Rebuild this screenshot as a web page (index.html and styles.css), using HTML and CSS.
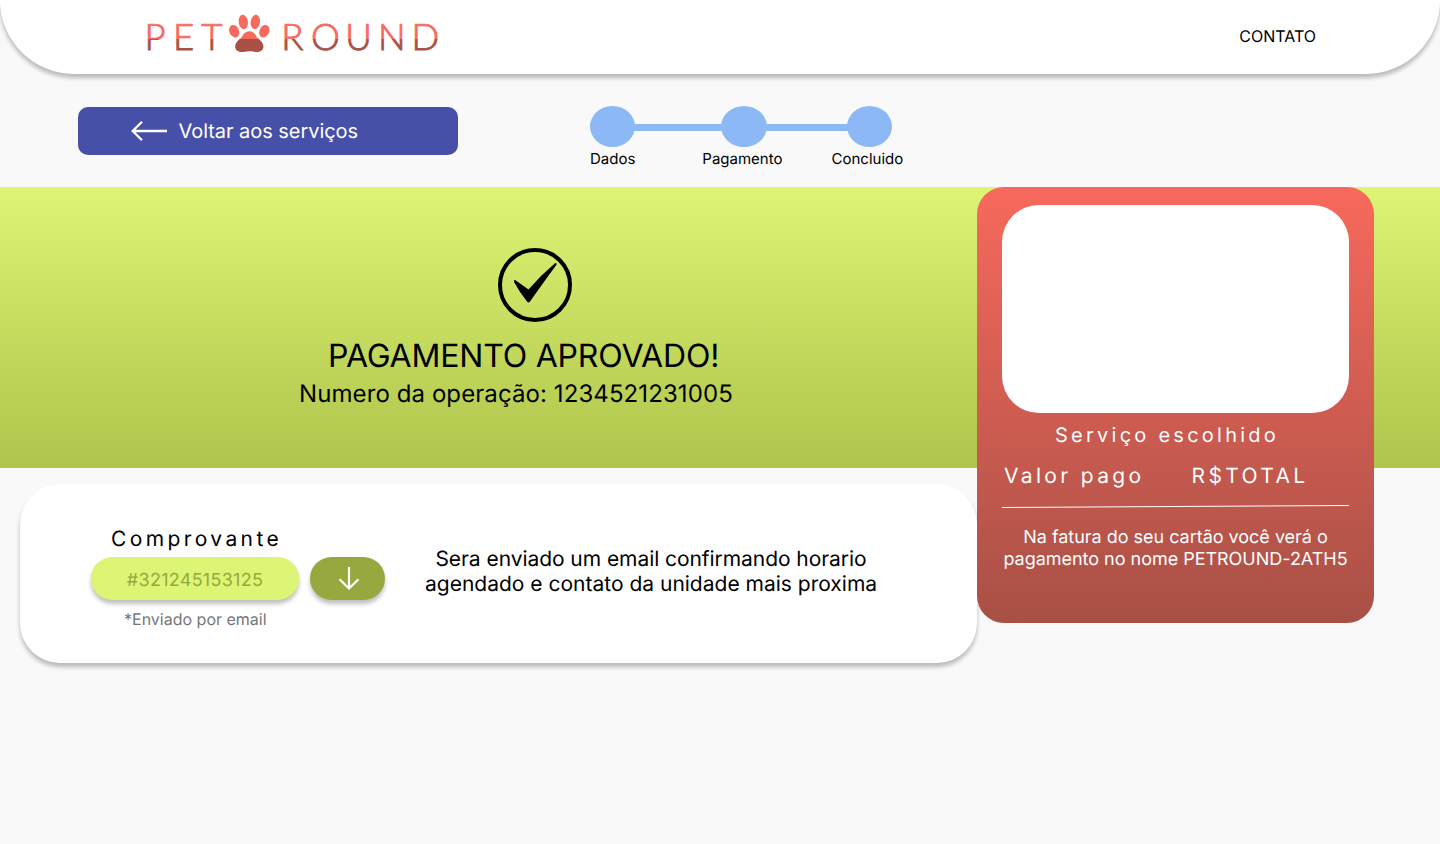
FILE: index.html
```html
<!DOCTYPE html>
<html lang="pt-BR">
<head>
<meta charset="utf-8">
<title>PetRound - Pagamento aprovado</title>
<link rel="stylesheet" href="styles.css">
</head>
<body>
<header class="header">
  <svg class="logo" width="300" height="50" viewBox="142 8 300 50" role="img" aria-label="PetRound">
    <defs>
      <linearGradient id="duo" gradientUnits="userSpaceOnUse" x1="0" y1="0" x2="0" y2="78">
        <stop offset="0.5" stop-color="#f7695c"/>
        <stop offset="0.5" stop-color="#a85046"/>
      </linearGradient>
    </defs>
    <g fill="url(#duo)">
      <text class="logo-text" y="49.700" x="144.500 173 201.200 281.200 311 345.300 378 411.500">PETROUND</text>
      <ellipse cx="243.300" cy="22" rx="4.600" ry="7.200" transform="rotate(-8 243.300 22)"/>
      <ellipse cx="255.300" cy="22" rx="4.600" ry="7.200" transform="rotate(8 255.300 22)"/>
      <ellipse cx="234.200" cy="31.200" rx="4.800" ry="6.500" transform="rotate(-24 234.200 31.200)"/>
      <ellipse cx="264.300" cy="31.200" rx="4.800" ry="6.500" transform="rotate(24 264.300 31.200)"/>
      <path d="M249.300 31.300c3.500 0 5.500 2.200 7.200 5.200 1.500 2.500 6.500 4.800 6.900 9.500.3 3.600-2.400 6-5.700 6-3 0-5-.8-8.400-.8s-5.400.8-8.400.8c-3.300 0-6-2.400-5.700-6 .4-4.700 5.400-7 6.900-9.500 1.700-3 3.700-5.200 7.200-5.200z"/>
    </g>
  </svg>
  <a class="contact">CONTATO</a>
</header>

<nav class="toolbar">
  <a class="back">
    <svg width="38" height="22" viewBox="0 0 38 22" fill="none" stroke="#fff" stroke-width="2.300"><path d="M37 11H3M12 1.700L2.700 11l9.300 9.300"/></svg>
    <span>Voltar aos serviços</span>
  </a>
  <div class="steps">
    <div class="track">
      <i class="dot"></i><i class="bar"></i><i class="dot dot-mid"></i><i class="bar bar-end"></i><i class="dot"></i>
    </div>
    <div class="labels"><span>Dados</span><span class="label-mid">Pagamento</span><span>Concluido</span></div>
  </div>
</nav>

<main class="main">
  <section class="approved">
    <svg class="check" width="74" height="74" viewBox="0 0 74 74"><circle cx="37" cy="37" r="35" fill="none" stroke="#000" stroke-width="4"/><path d="M17.500 32.300L30.500 41.500Q43 27 57 15.300Q59 14.500 58.500 16.800Q48 31 32 53.500Q30.500 55.500 29 53.500Q22 45 16 34Q15.700 31.500 17.500 32.300z"/></svg>
    <h1 class="title">PAGAMENTO APROVADO!</h1>
    <p class="operation">Numero da operação: 1234521231005</p>
  </section>

  <section class="receipt">
    <div class="voucher">
      <h2 class="voucher-title">Comprovante</h2>
      <div class="voucher-row">
        <div class="code">#321245153125</div>
        <div class="download"><svg width="22" height="24" viewBox="0 0 22 24" fill="none" stroke="#fff" stroke-width="2.200"><path d="M11 0v22M1.500 12.200L11 21.500l9.500-9.300"/></svg></div>
      </div>
      <p class="hint">*Enviado por email</p>
    </div>
    <p class="message"><span class="message-lead">Sera enviado um email confirmando horario</span><br>agendado e contato da unidade mais proxima</p>
  </section>

  <aside class="summary">
    <div class="photo"></div>
    <p class="service">Serviço escolhido</p>
    <div class="price"><span>Valor pago</span><span class="total">R$TOTAL</span></div>
    <svg class="rule" width="347" height="4" viewBox="0 0 347 4"><path d="M0 3.500L347 1.500" stroke="#fff"/></svg>
    <p class="note">Na fatura do seu cartão você verá o<br>pagamento no nome PETROUND-2ATH5</p>
  </aside>
</main>
</body>
</html>
```
FILE: styles.css
```css
* { box-sizing: border-box; }
body { margin: 0; min-height: 844px; background: #f9f9f9; color: #000; font-family: Inter, "Liberation Sans", sans-serif; overflow: hidden; text-rendering: geometricPrecision; }
h1, h2, p { margin: 0; font-weight: 400; white-space: nowrap; }
svg { display: block; flex: none; overflow: visible; }

.header { display: flex; justify-content: space-between; height: 74px; padding: 8px 124px 0 142px; background: #fff; border-radius: 0 0 74px 74px; box-shadow: 0 4px 4px rgba(0, 0, 0, .25); }
.logo-text { font-family: Lato, sans-serif; font-size: 36.5px; font-weight: 300; stroke: url(#duo); stroke-width: .9px; }
.contact { padding-top: 18px; font-size: 16px; line-height: 20px; }

.toolbar { display: flex; height: 113px; padding: 32px 0 0 78px; }
.back { display: flex; align-items: center; gap: 10.5px; width: 380px; height: 48px; margin-top: 1px; padding-left: 52px; border-radius: 10px; background: #4750a8; color: #fff; font-size: 20px; letter-spacing: -.05px; }
.steps { width: 314px; margin-left: 132px; }
.track { display: flex; align-items: center; width: 302px; height: 41px; }
.dot { width: 45px; height: 41px; border-radius: 50%; background: #8cb9f5; flex: none; }
.dot-mid { width: 46px; }
.bar { flex: 1; height: 7px; margin: 2px -2px 0; background: #8cb9f5; }
.bar-end { flex: 0 0 84px; }
.labels { display: flex; font-size: 15px; line-height: 24px; }
.label-mid { margin: 0 49px 0 67px; }

.main { position: relative; }
.approved { height: 281px; padding-top: 61px; background: linear-gradient(180deg, #ddf575, #afc44b); }
.check { margin-left: 498px; }
.title { margin: 14px 0 0 328px; font-size: 32px; line-height: 40px; letter-spacing: -.2px; }
.operation { margin: 3px 0 0 299px; font-size: 24px; line-height: 30px; letter-spacing: .09px; }

.receipt { display: flex; width: 957px; height: 179px; margin: 16px 0 0 20px; padding: 42px 0 0 71px; border-radius: 40px; background: #fff; box-shadow: 0 4px 4px rgba(0, 0, 0, .25); }
.voucher { width: 294px; }
.voucher-title { padding-left: 20px; font-size: 21px; line-height: 28px; letter-spacing: 3.4px; }
.voucher-row { display: flex; gap: 11px; margin-top: 3px; }
.code, .download { display: flex; align-items: center; justify-content: center; height: 43px; border-radius: 22px; box-shadow: 0 4px 4px rgba(0, 0, 0, .25); }
.code { width: 208px; padding-top: 3px; background: #ddf575; color: #96a83e; font-size: 18px; letter-spacing: .28px; }
.download { width: 75px; background: #96a83e; padding-left: 2px; }
.hint { margin-top: 9px; padding-left: 33px; color: #777; font-size: 16px; line-height: 20px; }
.message { width: 452px; margin: 21px 0 0 40px; font-size: 21px; line-height: 25px; text-align: center; }
.message-lead { letter-spacing: -.06px; }

/* Overlaps the green banner and the page below it */
.summary { position: absolute; left: 977px; top: 0; width: 397px; height: 436px; padding: 18px 25px; border-radius: 27px; background: linear-gradient(180deg, #f7695c, #a85046); color: #fff; }
.photo { height: 208px; border-radius: 37px; background: #fff; }
.service { margin: 8px 0 0 53px; font-size: 20px; line-height: 28px; letter-spacing: 3.25px; }
.price { display: flex; gap: 47px; margin: 14px 0 0 2px; font-size: 21px; line-height: 28px; letter-spacing: 3.35px; white-space: nowrap; }
.rule { margin-top: 13px; }
.note { margin: 19px -5px 0; font-size: 18px; line-height: 22px; text-align: center; letter-spacing: -.02px; }
```
